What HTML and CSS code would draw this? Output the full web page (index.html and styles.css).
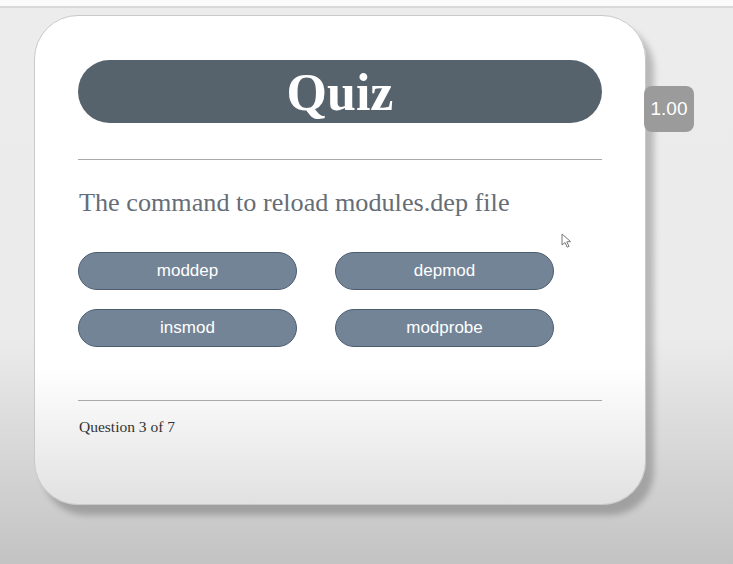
FILE: index.html
```html
<!DOCTYPE html>
<html>
<head>
<meta charset="utf-8">
<link rel="stylesheet" href="styles.css">
</head>
<body>
<div class="topbar"></div>
<main class="stage">
  <section class="card">
    <h1 class="title">Quiz</h1>
    <hr class="rule">
    <p class="question">The command to reload modules.dep file</p>
    <div class="answers">
      <button class="answer">moddep</button>
      <button class="answer">depmod</button>
      <button class="answer">insmod</button>
      <button class="answer">modprobe</button>
    </div>
    <hr class="rule rule-bottom">
    <p class="progress">Question 3 of 7</p>
  </section>
  <div class="badge">1.00</div>
  <svg class="cursor" width="12" height="16" viewBox="0 0 12 16"><path d="M1 1 L1 12 L4 9.5 L6.2 14.2 L8 13.4 L5.8 8.8 L9.6 8.6 Z" fill="#fff" stroke="#777" stroke-width="1" stroke-linejoin="round"/></svg>
</main>
</body>
</html>
```
FILE: styles.css
```css
html, body {
  margin: 0;
  padding: 0;
  height: 100%;
}
body {
  background: linear-gradient(to bottom, #ececec 0%, #ebebeb 60%, #c3c3c3 100%);
  font-family: "Liberation Serif", serif;
  overflow: hidden;
}
.topbar {
  height: 6px;
  background: #fbfbfb;
  border-bottom: 2px solid #d9d9d9;
}
.stage {
  position: relative;
  padding: 7px 0 0 34px;
}
.card {
  box-sizing: border-box;
  width: 612px;
  height: 490px;
  border: 1px solid #c9c9c9;
  border-radius: 44px;
  background: linear-gradient(to bottom, #ffffff 0%, #ffffff 72%, #e1e1e1 100%);
  box-shadow: 8px 10px 6px rgba(0, 0, 0, 0.22);
  padding: 44px 43px 0 43px;
}
.title {
  margin: 0;
  height: 63px;
  border-radius: 32px;
  background: #56636d;
  color: #fff;
  font-family: "Liberation Serif", serif;
  font-weight: bold;
  font-size: 52px;
  line-height: 66px;
  text-align: center;
}
.rule {
  border: 0;
  border-top: 1px solid #a9a9a9;
  margin: 36px 0 0 0;
}
.question {
  margin: 28px 0 0 1px;
  font-size: 26.2px;
  line-height: 30px;
  color: #666d76;
}
.answers {
  display: grid;
  grid-template-columns: 219px 219px;
  column-gap: 38px;
  row-gap: 19px;
  margin-top: 34px;
}
.answer {
  height: 38px;
  border: 1px solid #4c5d72;
  border-radius: 20px;
  background: #738497;
  color: #fff;
  font-family: "Liberation Sans", Arial, sans-serif;
  font-size: 17px;
  padding: 0;
}
.rule-bottom {
  margin-top: 53px;
}
.progress {
  margin: 17px 0 0 1px;
  font-size: 15.5px;
  color: #333;
}
.badge {
  position: absolute;
  left: 644px;
  top: 78px;
  width: 50px;
  height: 46px;
  border-radius: 8px;
  background: #9b9b9b;
  color: #fff;
  font-family: "Liberation Sans", Arial, sans-serif;
  font-size: 19px;
  line-height: 46px;
  text-align: center;
}
.cursor {
  position: absolute;
  left: 561px;
  top: 225px;
}
```
